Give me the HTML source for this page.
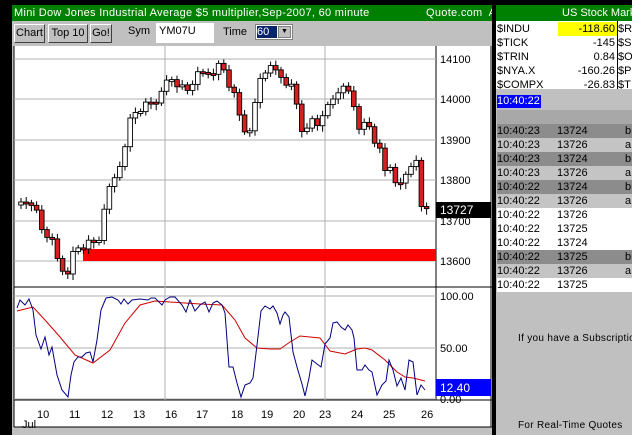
<!DOCTYPE html>
<html><head><meta charset="utf-8"><style>
*{margin:0;padding:0;box-sizing:border-box}
body{width:632px;height:435px;background:#000;position:relative;overflow:hidden;font-family:"Liberation Sans",sans-serif;font-size:11px}
.a{position:absolute}
.btn{position:absolute;top:24px;height:19px;background:#c0c0c0;border:1px solid;border-color:#fff #404040 #404040 #fff;font-size:11px;line-height:17px;text-align:center}
.row{position:absolute;left:497px;width:135px;height:14px;font-size:11px;line-height:14px}
.row span{position:absolute}
</style></head><body>
<div class="a" style="left:12px;top:5px;width:480px;height:430px;background:#c0c0c0"></div>
<div class="a" style="left:12px;top:5px;width:480px;height:16px;background:#008000;color:#fff;font-size:11px;line-height:16px;padding-left:2px;letter-spacing:0.3px;white-space:nowrap;overflow:hidden">Mini Dow Jones Industrial Average $5 multiplier,Sep-2007, 60 minute<span style="position:absolute;left:414px;white-space:nowrap">Quote.com&nbsp; A</span></div>
<div class="btn" style="left:14px;width:31px">Chart</div>
<div class="btn" style="left:48px;width:40px">Top 10</div>
<div class="btn" style="left:90px;width:22px">Go!</div>
<div class="a" style="left:128px;top:25px">Sym</div>
<div class="a" style="left:156px;top:23px;width:58px;height:20px;background:#fff;padding:2px 3px">YM07U</div>
<div class="a" style="left:223px;top:26px">Time</div>
<div class="a" style="left:255px;top:24px;width:38px;height:16px;background:#fff;border:1px solid #808080"><div class="a" style="left:1px;top:1px;width:20px;height:12px;background:#0a246a;color:#fff;line-height:12px;font-size:11px">60</div><div class="a" style="right:1px;top:1px;width:13px;height:12px;background:#c0c0c0;border:1px solid #808080;font-size:7px;text-align:center;line-height:10px">▼</div></div>
<svg class="a" style="left:0;top:0" width="496" height="435" xmlns="http://www.w3.org/2000/svg">
<rect x="14" y="46" width="478" height="381" fill="#fff"/>
<g stroke="#000" fill="none"><line x1="14" y1="46" x2="14" y2="427"/><line x1="436" y1="46" x2="436" y2="400"/><line x1="14" y1="287" x2="492" y2="287"/><line x1="14" y1="400" x2="492" y2="400"/><line x1="491" y1="46" x2="491" y2="427"/><line x1="14" y1="427" x2="492" y2="427"/></g>
<g stroke="#b0b0b0"><line x1="14" y1="59" x2="436" y2="59"/><line x1="14" y1="99" x2="436" y2="99"/><line x1="14" y1="140" x2="436" y2="140"/><line x1="14" y1="180" x2="436" y2="180"/><line x1="14" y1="221" x2="436" y2="221"/><line x1="14" y1="261" x2="436" y2="261"/><line x1="14" y1="296" x2="436" y2="296"/><line x1="14" y1="348" x2="436" y2="348"/><line x1="14" y1="399" x2="436" y2="399"/><line x1="165" y1="46" x2="165" y2="400"/><line x1="325" y1="46" x2="325" y2="400"/></g>
<rect x="83" y="249" width="353" height="12" fill="#ff0000"/>
<g font-size="11" fill="#000"><text x="440" y="63">14100</text><text x="440" y="103">14000</text><text x="440" y="144">13900</text><text x="440" y="184">13800</text><text x="440" y="225">13700</text><text x="440" y="265">13600</text><text x="440" y="300">100.00</text><text x="440" y="352">50.00</text><text x="440" y="403">0.00</text>
<text x="37" y="418">10</text><text x="69" y="418">11</text><text x="101" y="418">12</text><text x="133" y="418">13</text><text x="165" y="418">16</text><text x="196" y="418">17</text><text x="231" y="418">18</text><text x="261" y="418">19</text><text x="293" y="418">20</text><text x="319" y="418">23</text><text x="351" y="418">24</text><text x="383" y="418">25</text><text x="421" y="418">26</text><text x="22" y="428">Jul</text></g>
<g id="cd"></g>
<polyline fill="none" stroke="#d00000" stroke-width="1" points="17,311 33,307 45,320 60,337 75,355 93,363 110,350 125,323 140,305 155,301 170,302 185,303 200,304 222,305 235,320 245,338 257,348 270,349 280,349 290,342 300,336 310,337 320,338 330,351 345,354 357,349 365,348 372,350 385,360 397,372 405,377 413,378 425,381"/>
<polyline fill="none" stroke="#000080" stroke-width="1" points="17,308 20,300 25,305 29,299 33,310 36,335 41,349 45,337 49,355 52,347 57,375 62,390 68,397 71,375 74,362 78,357 82,357 86,353 90,352 93,362 97,340 101,310 106,298 112,297 118,300 121,304 124,299 128,304 132,300 140,299 148,300 151,298 155,298 162,305 165,300 170,297 175,297 182,305 186,312 190,300 195,311 200,305 205,302 209,312 213,303 217,301 222,305 225,313 229,367 233,367 237,383 241,397 245,385 250,383 253,378 257,345 261,311 265,306 270,309 273,306 277,313 280,324 283,315 285,312 289,317 293,352 297,367 302,384 305,396 309,378 312,360 317,364 321,367 325,344 330,338 333,323 337,322 341,327 345,330 348,325 352,330 354,338 357,370 362,370 365,365 369,370 372,372 377,395 382,385 386,381 389,360 393,370 397,386 401,378 405,390 409,360 413,362 417,395 421,385 425,390"/>
<rect x="436" y="202" width="55" height="16" fill="#000"/><text x="440" y="214" fill="#fff" font-size="12">13727</text>
<rect x="436" y="379" width="55" height="17" fill="#0000ff"/><text x="440" y="392" fill="#fff" font-size="12">12.40</text>
</svg>
<div class="a" style="left:496px;top:5px;width:136px;height:430px;background:#c0c0c0"></div>
<div class="a" style="left:496px;top:5px;width:136px;height:16px;background:#008000;color:#fff;line-height:16px;padding-left:66px;white-space:nowrap;overflow:hidden;font-size:11px">US Stock Market</div>
<div class="a" style="left:496px;top:21px;width:136px;height:68px;background:#fff"></div>
<div class="a" style="left:558px;top:22px;width:59px;height:14px;background:#ffff00"></div>
<div class="a" style="left:617px;top:21px;width:1px;height:68px;background:#000"></div>
<div class="row" style="top:22px"><span>$INDU</span><span style="right:17px">-118.60</span><span style="left:121px">$R</span></div>
<div class="row" style="top:36px"><span>$TICK</span><span style="right:17px">-145</span><span style="left:121px">$S</span></div>
<div class="row" style="top:50px"><span>$TRIN</span><span style="right:17px">0.84</span><span style="left:121px">$O</span></div>
<div class="row" style="top:64px"><span>$NYA.X</span><span style="right:17px">-160.26</span><span style="left:121px">$P</span></div>
<div class="row" style="top:78px"><span>$COMPX</span><span style="right:17px">-26.83</span><span style="left:121px">$T</span></div>
<div class="a" style="left:497px;top:95px;width:44px;height:13px;background:#0000ff;color:#fff;line-height:13px;font-size:11px">10:40:22</div>
<div class="a" style="left:497px;top:110px;width:135px;height:14px;background:#a8a8a8"></div>
<div id="tr"></div>
<div class="a" style="left:518px;top:333px;font-size:10px;white-space:nowrap;letter-spacing:0.3px">If you have a Subscription</div>
<div class="a" style="left:518px;top:420px;font-size:10px;white-space:nowrap;letter-spacing:0.3px">For Real-Time Quotes</div>
<script>
var rows=[["10:40:23","13724","b","#8c8c8c"],["10:40:23","13726","a","#c4c4c4"],["10:40:23","13724","b","#8c8c8c"],["10:40:23","13726","a","#c4c4c4"],["10:40:22","13724","b","#8c8c8c"],["10:40:22","13726","a","#c4c4c4"],["10:40:22","13726","","#fff"],["10:40:22","13725","","#fff"],["10:40:22","13724","","#fff"],["10:40:22","13725","b","#8c8c8c"],["10:40:22","13726","a","#c4c4c4"],["10:40:22","13725","","#fff"]];
var h="";rows.forEach(function(r,i){h+='<div class="row" style="top:'+(124+i*14)+'px;background:'+r[3]+'"><span style="left:0">'+r[0]+'</span><span style="left:60px">'+r[1]+'</span><span style="left:128px">'+r[2]+'</span></div>';});
document.getElementById("tr").innerHTML=h;
(function(){
var NS="http://www.w3.org/2000/svg";var g=document.getElementById("cd");
function el(n,at){var e=document.createElementNS(NS,n);for(var k in at){e.setAttribute(k,String(at[k]));}g.appendChild(e);}
var P=[[18,205],[24,202],[30,200],[35,203],[38,222],[43,232],[48,235],[53,245],[58,262],[64,272],[70,268],[74,250],[80,247],[86,245],[94,244],[100,238],[102,213],[106,198],[110,188],[114,180],[118,165],[124,160],[128,125],[132,115],[138,108],[146,105],[155,100],[160,100],[166,82],[172,78],[180,85],[186,93],[192,82],[198,76],[205,73],[212,71],[218,66],[224,70],[228,82],[233,93],[238,110],[243,133],[248,125],[252,128],[256,98],[262,70],[270,70],[278,72],[284,80],[290,82],[294,97],[298,108],[303,135],[308,132],[313,118],[318,125],[324,107],[330,108],[335,93],[340,88],[345,92],[352,93],[356,120],[361,128],[366,124],[371,128],[376,145],[381,155],[385,172],[391,165],[396,180],[402,188],[407,170],[412,162],[416,162],[419,205],[423,210],[428,206]];
function yAt(x){for(var i=1;i<P.length;i++){if(x<=P[i][0]){var a=P[i-1],b=P[i];return a[1]+(b[1]-a[1])*(x-a[0])/(b[0]-a[0]);}}return P[P.length-1][1];}
var prev=yAt(18),k=0;
for(var x=21;x<=429;x+=5.2){k++;var c=yAt(x)+((k*37)%7-3)*1.5;var o=prev;var top=Math.min(o,c),bot=Math.max(o,c);if(bot-top<2){bot=top+2;}
var red=c>o;
el("line",{x1:x.toFixed(1),x2:x.toFixed(1),y1:(top-3-(k%3)).toFixed(1),y2:(bot+3+(k%4)).toFixed(1),stroke:"#000"});
el("rect",{x:(x-2.3).toFixed(1),y:top.toFixed(1),width:4.6,height:(bot-top).toFixed(1),fill:(red?"#d42020":"#fff"),stroke:"#000","stroke-width":0.9});
prev=c;}
})();
</script>
</body></html>
